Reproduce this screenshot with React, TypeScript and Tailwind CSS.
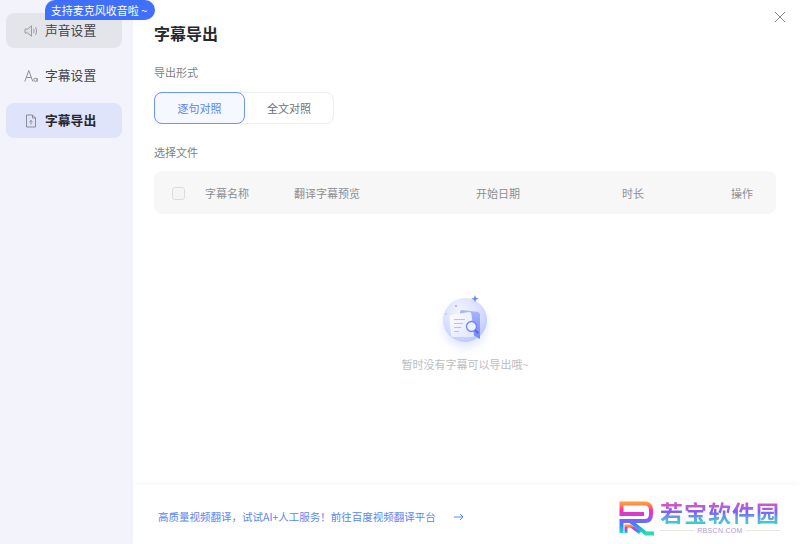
import React from "react";

const font = { fontFamily: '"Noto Sans CJK SC", "Noto Sans", sans-serif' };

function Speaker() {
  return (
    <svg width="14" height="14" viewBox="0 0 14 14" fill="none" stroke="#9a9ca3" strokeWidth="1">
      <path d="M1 5h2.5L7.5 1.8v10.4L3.5 9H1z" fill="#e0e0e4" />
      <path d="M9.5 4.8c.8 1.3.8 3.1 0 4.4M11.5 3.2c1.4 2.3 1.4 5.3 0 7.6" />
    </svg>
  );
}

function FontIcon() {
  return (
    <svg width="14" height="14" viewBox="0 0 14 14" fill="none" stroke="#8f9198" strokeWidth="1">
      <path d="M0.8 12.5 4.8 1.5 8.8 12.5M2.3 8.5h5" />
      <circle cx="11.4" cy="10.8" r="1.6" />
      <path d="M13.2 9v3.8" />
    </svg>
  );
}

function FileIcon() {
  return (
    <svg width="14" height="14" viewBox="0 0 14 14" fill="none" stroke="#8a8d95" strokeWidth="1">
      <path d="M2.5 1h6l3 3v9h-9z" />
      <path d="M8.5 1v3h3M7 10.5V6.5M5.4 8 7 6.5 8.6 8" />
    </svg>
  );
}

function EmptyIllustration() {
  return (
    <svg width="70" height="62" viewBox="0 0 70 62" fill="none">
      <defs>
        <radialGradient id="ball" cx="40%" cy="30%" r="75%">
          <stop offset="0%" stopColor="#f4f5ff" />
          <stop offset="65%" stopColor="#d6dcff" />
          <stop offset="100%" stopColor="#b9c5ff" />
        </radialGradient>
        <filter id="blur" x="-50%" y="-50%" width="200%" height="200%">
          <feGaussianBlur stdDeviation="5" />
        </filter>
        <linearGradient id="page" x1="0" y1="0" x2="1" y2="1">
          <stop offset="0%" stopColor="#fdfdff" />
          <stop offset="100%" stopColor="#e0e5ff" />
        </linearGradient>
        <linearGradient id="folder" x1="0" y1="0" x2="0" y2="1">
          <stop offset="0%" stopColor="#a9b8fd" />
          <stop offset="100%" stopColor="#7088f5" />
        </linearGradient>
      </defs>
      <circle cx="35" cy="33" r="21" fill="#c4cefe" opacity="0.55" filter="url(#blur)" />
      <circle cx="35" cy="27" r="22" fill="url(#ball)" />
      <path d="M30 19 Q30 17 32 17 L48 19 Q50 19.5 50 22 V46 L40 40 H30Z" fill="url(#folder)" />
      <path d="M21 22 L39 19 Q41 19 41.5 21 L44 42 Q44 44 42 44 L23 44 Q21 44 21 42 L19.5 24 Q19.5 22 21 22Z" fill="url(#page)" />
      <path d="M24 26.5h11M24 30.5h9M24 34.5h7M24 38.5h5" stroke="#b4c0fb" strokeWidth="1" />
      <circle cx="41.5" cy="33.5" r="5" fill="#eef1ff" stroke="#6f86f2" strokeWidth="1.3" />
      <path d="M45.2 37.2 48.4 40.4" stroke="#4f67de" strokeWidth="1.8" />
      <path d="M45 2 L46 4.8 L48.8 5.8 L46 6.8 L45 9.6 L44 6.8 L41.2 5.8 L44 4.8Z" fill="#7388f2" />
      <circle cx="26" cy="13" r="1.1" fill="#a4b2f8" />
      <circle cx="16" cy="21" r="0.8" fill="#a4b2f8" />
    </svg>
  );
}

function LogoR() {
  return (
    <svg width="36" height="36" viewBox="0 0 36 36" fill="none">
      <defs>
        <linearGradient id="logoR" x1="0" y1="0" x2="0" y2="1">
          <stop offset="0%" stopColor="#ff9a3c" />
          <stop offset="22%" stopColor="#ff2fa8" />
          <stop offset="50%" stopColor="#a24dff" />
          <stop offset="72%" stopColor="#2a8cff" />
          <stop offset="100%" stopColor="#25e0b0" />
        </linearGradient>
      </defs>
      <path
        d="M2.5 33V21H26C30 21 32 18.5 32 14V10C32 6 30 3.5 26 3.5H2.5V14H25M11 21 27 33.5H35"
        stroke="url(#logoR)"
        strokeWidth="4"
        fill="none"
      />
      <path d="M7 33V26H12L21 33" stroke="url(#logoR)" strokeWidth="3" fill="none" />
    </svg>
  );
}

function NavItem({
  icon,
  label,
  cls,
  strong,
}: {
  icon: React.ReactNode;
  label: string;
  cls: string;
  strong?: boolean;
}) {
  return (
    <div className={`h-[35px] rounded-lg flex items-center pl-[18px] gap-[7px] ${cls}`}>
      <span className="flex w-[14px] justify-center">{icon}</span>
      <span className={`text-[12.8px] leading-[18px] pb-[2px] ${strong ? "font-semibold text-[#26282c]" : "text-[#44464b]"}`}>{label}</span>
    </div>
  );
}

export default function App() {
  return (
    <div className="relative w-[800px] h-[544px] flex bg-white overflow-hidden" style={font}>
      <aside className="w-[133px] shrink-0 bg-[#f3f4fb] pt-[13px] px-[6px] pr-[11px] flex flex-col gap-[10px]">
        <NavItem icon={<Speaker />} label="声音设置" cls="bg-[#e4e5ea]" />
        <NavItem icon={<FontIcon />} label="字幕设置" cls="" />
        <NavItem icon={<FileIcon />} label="字幕导出" cls="bg-[#dfe4fb]" strong />
      </aside>

      <div className="absolute left-[45px] top-0 w-[110px] h-[20px] bg-[#3f6ffb] text-white text-[11px] rounded-bl-none rounded-br-[10px] rounded-tr-[10px] rounded-tl-[10px] flex items-center justify-center pr-[2px]">
        支持麦克风收音啦 ~
      </div>

      <main className="flex-1 flex flex-col min-w-0">
        <div className="flex-1 flex flex-col pl-[21px] pr-[24px] pt-[21px] min-h-0">
          <div className="flex justify-between items-start h-[24px]">
            <h1 className="text-[16px] leading-[24px] font-bold text-[#26282c]">字幕导出</h1>
            <svg width="12" height="12" viewBox="0 0 12 12" className="mt-[-10px] mr-[-10px]" stroke="#85878c" strokeWidth="1">
              <path d="M1 1 11 11M11 1 1 11" />
            </svg>
          </div>

          <div className="mt-[18px] text-[11px] leading-[18px] text-[#7d7f85]">导出形式</div>
          <div className="mt-[11px] flex w-[180px] h-[32px] rounded-lg border border-[#eceef5] text-[11px]">
            <div className="w-[91px] -m-px rounded-lg border-[1.5px] border-[#6d93fb] bg-[#f5f8ff] text-[#5a82f8] flex items-center justify-center">
              逐句对照
            </div>
            <div className="flex-1 flex items-center justify-center text-[#6a6f80] ml-px">全文对照</div>
          </div>

          <div className="mt-[19px] text-[11px] leading-[18px] text-[#7d7f85]">选择文件</div>
          <div className="mt-[10px] h-[43px] rounded-lg bg-[#f7f7f8] flex items-center text-[11px] text-[#8c8e93] pt-[1px]">
            <span className="ml-[18px] w-[13px] h-[13px] rounded-[3px] border border-[#dcdde0] bg-[#f5f5f6]" />
            <span className="ml-[20px] w-[89px]">字幕名称</span>
            <span className="w-[182px]">翻译字幕预览</span>
            <span className="w-[146px]">开始日期</span>
            <span className="w-[109px]">时长</span>
            <span>操作</span>
          </div>

          <div className="flex flex-col items-center mt-[79px] w-full">
            <EmptyIllustration />
            <div className="text-[11px] leading-[18px] text-[#bcbdc2]">暂时没有字幕可以导出哦~</div>
          </div>
        </div>

        <footer className="h-[59px] shrink-0 bg-white shadow-[0_-3px_6px_rgba(0,0,0,0.025)] flex items-center pl-[25px] relative">
          <span className="text-[10.5px] text-[#5a86f7] mt-[5px]">高质量视频翻译，试试AI+人工服务！前往百度视频翻译平台</span>
          <svg width="10" height="8" viewBox="0 0 10 8" className="ml-[18px] mt-[5px]" fill="none" stroke="#5a86f7" strokeWidth="1">
            <path d="M0 4h9M6 1l3 3-3 3" />
          </svg>
          <div className="absolute left-[486px] top-[15px] flex items-start gap-[5px]">
            <LogoR />
            <div className="flex flex-col items-center w-[120px]">
              <span className="block text-[23px] leading-[24px] font-bold tracking-[1px] whitespace-nowrap bg-clip-text text-transparent bg-gradient-to-b from-[#ff3fa6] via-[#7b5cff] to-[#1fd8c0]">
                若宝软件园
              </span>
              <div className="flex items-center w-full gap-[3px] mt-[2px]">
                <span className="flex-1 h-px bg-[#e6e6e0]" />
                <span className="text-[7px] leading-[9px] text-[#b09ad8] tracking-[0.3px]" style={{ fontFamily: '"Liberation Sans", sans-serif' }}>
                  RBSCN.COM
                </span>
                <span className="flex-1 h-px bg-[#e6e6e0]" />
              </div>
            </div>
          </div>
        </footer>
      </main>
    </div>
  );
}
